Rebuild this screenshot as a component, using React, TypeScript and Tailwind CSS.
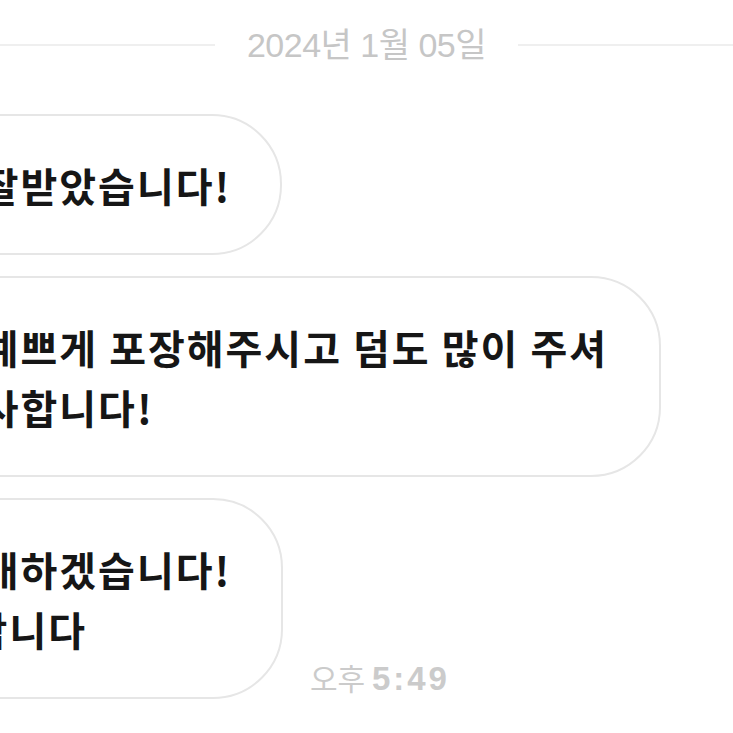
import React from 'react'

const font = { fontFamily: '"Liberation Sans", "Noto Sans CJK KR", sans-serif' }

type Bubble = {
  lines: string[]
  width: string
  time?: string
}

const bubbles: Bubble[] = [
  { lines: ['물건 잘받았습니다!'], width: 'w-[412px]' },
  { lines: ['너무 예쁘게 포장해주시고 덤도 많이 주셔', '서 감사합니다!'], width: 'w-[791px]' },
  { lines: ['또 구매하겠습니다!', '감사합니다'], width: 'w-[413px]', time: '5:49' },
]

export default function App() {
  return (
    <div
      className="w-[733px] h-[733px] overflow-hidden bg-white pt-[25px]"
      style={font}
    >
      {/* Date divider */}
      <div className="flex items-center h-[40px] gap-[32px]">
        <div className="flex-1 h-[2px] bg-[#efefef]" />
        <span className="text-[34px] leading-none text-[#c6c6c6] tracking-[-0.5px]">
          2024년 1월 05일
        </span>
        <div className="flex-1 h-[2px] bg-[#efefef]" />
      </div>

      {/* Messages */}
      <div className="mt-[49px] flex flex-col gap-[21px]">
        {bubbles.map((b, i) => (
          <div key={i} className="flex items-end">
            <div
              className={`${b.width} shrink-0 -ml-[130px] rounded-[70px] border-2 border-[#e6e6e6] bg-white pl-[21px] pt-[39px] pb-[38px]`}
            >
              {b.lines.map((line, j) => (
                <div
                  key={j}
                  className="whitespace-nowrap text-[40px] leading-[60px] font-bold tracking-[2px] text-[#161616] font-['Noto_Sans_CJK_KR',sans-serif]"
                >
                  {line}
                </div>
              ))}
            </div>
            {b.time && (
              <div className="ml-[27px] mb-[4px] whitespace-nowrap leading-none text-[#cbcbcb]">
                <span className="text-[30px] font-normal font-['Noto_Sans_CJK_KR',sans-serif]">오후 </span>
                <span className="text-[33px] font-bold tracking-[3px] font-['Liberation_Sans',sans-serif]">{b.time}</span>
              </div>
            )}
          </div>
        ))}
      </div>
    </div>
  )
}
